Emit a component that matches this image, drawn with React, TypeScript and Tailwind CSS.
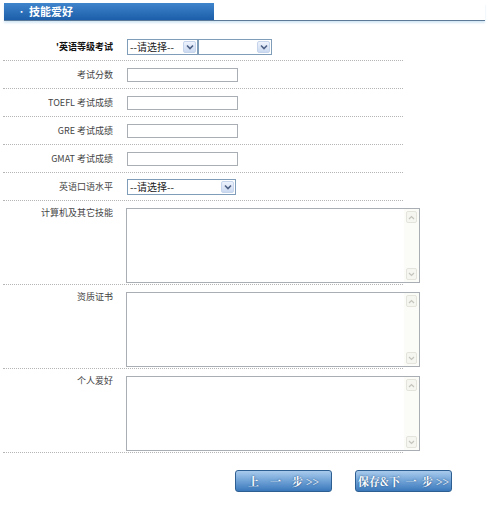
import React from 'react';

const cjk = '"Noto Sans CJK SC", "Liberation Sans", sans-serif';

function Chevron() {
  return (
    <svg width="8" height="6" viewBox="0 0 8 6">
      <path d="M1 1.5 L4 4.5 L7 1.5" fill="none" stroke="#4d6185" strokeWidth="1.6" />
    </svg>
  );
}

function FakeSelect({ width, text }: { width: number; text?: string }) {
  return (
    <div
      className="flex h-[16px] shrink-0 items-stretch border border-[#7f9db9] bg-white"
      style={{ width }}
    >
      <div className="flex-1 truncate whitespace-nowrap pl-[2px] text-[10px] leading-[14px] text-[#222]">{text}</div>
      <div className="m-[1px] flex w-[13px] items-center justify-center rounded-[2px] border border-[#c6d5ec] bg-gradient-to-b from-[#eef3fc] to-[#cbdaf1]">
        <Chevron />
      </div>
    </div>
  );
}

function TextBox() {
  return <div className="h-[14px] w-[111px] border border-[#a9aeb4] bg-white" />;
}

function FakeTextArea() {
  return (
    <div className="flex h-[75px] w-[294px] shrink-0 border border-[#a9aeb4] bg-white">
      <div className="flex-1" />
      <div className="flex w-[15px] flex-col items-center justify-between bg-[#fbfbf8] py-[2px]">
        <div className="flex h-[12px] w-[11px] items-center justify-center rounded-[2px] border border-[#e4e4dc] bg-[#f6f6f1]">
          <svg width="7" height="5" viewBox="0 0 7 5">
            <path d="M1 4 L3.5 1.5 L6 4" fill="none" stroke="#c4c4bc" strokeWidth="1.2" />
          </svg>
        </div>
        <div className="flex h-[12px] w-[11px] items-center justify-center rounded-[2px] border border-[#e4e4dc] bg-[#f6f6f1]">
          <svg width="7" height="5" viewBox="0 0 7 5">
            <path d="M1 1 L3.5 3.5 L6 1" fill="none" stroke="#c4c4bc" strokeWidth="1.2" />
          </svg>
        </div>
      </div>
    </div>
  );
}

function Row({ label, bold, children }: { label: string; bold?: boolean; children: React.ReactNode }) {
  return (
    <div className="flex h-[28px] w-[400px] items-center border-b border-dotted border-[#b5b5b5]">
      <div
        className={`w-[110px] shrink-0 whitespace-nowrap text-right text-[9px] leading-[12px] ${bold ? 'font-bold text-[#111]' : 'text-[#444]'}`}
      >
        {label}
      </div>
      <div className="ml-[14px] shrink-0">{children}</div>
    </div>
  );
}

function AreaRow({ label }: { label: string }) {
  return (
    <div className="flex h-[84px] w-[400px] items-start border-b border-dotted border-[#b5b5b5] pt-[6px]">
      <div className="w-[110px] shrink-0 whitespace-nowrap text-right text-[9px] leading-[12px] text-[#444]">{label}</div>
      <div className="ml-[13px] mt-[1px] shrink-0">
        <FakeTextArea />
      </div>
    </div>
  );
}

function BlueButton({ children }: { children: React.ReactNode }) {
  return (
    <div
      className="flex h-[22px] w-[97px] items-center justify-center whitespace-pre rounded-[3px] border border-[#2e5f93] bg-gradient-to-b from-[#a9cbec] via-[#6fa2d6] to-[#3a78bb] text-[11px] font-bold text-white [text-shadow:0_0_2px_#1d4878]"
      style={{ fontFamily: '"Noto Serif CJK SC", "Liberation Serif", serif' }}
    >
      {children}
    </div>
  );
}

export default function App() {
  return (
    <div className="h-[507px] w-[488px] bg-white" style={{ fontFamily: cjk }}>
      {/* title bar */}
      <div className="ml-[4px] mr-[3px] mt-[3px] flex items-end border-b border-[#5d7b99] shadow-[0_2px_2px_#d6e8f6]">
        <div className="flex h-[17px] w-[210px] items-center bg-gradient-to-b from-[#3f85cc] to-[#1c5ea9] pl-[14px] text-[11px] font-bold text-white">
          <span className="mr-[4px] text-[7px]">•</span>技能爱好
        </div>
      </div>

      <div className="ml-[3px] mt-[12px]">
        <Row label="'英语等级考试" bold>
          <div className="flex">
            <FakeSelect width={71} text="--请选择--" />
            <FakeSelect width={74} />
          </div>
        </Row>
        <Row label="考试分数">
          <TextBox />
        </Row>
        <Row label="TOEFL 考试成绩">
          <TextBox />
        </Row>
        <Row label="GRE 考试成绩">
          <TextBox />
        </Row>
        <Row label="GMAT 考试成绩">
          <TextBox />
        </Row>
        <Row label="英语口语水平">
          <FakeSelect width={109} text="--请选择--" />
        </Row>
        <AreaRow label="计算机及其它技能" />
        <AreaRow label="资质证书" />
        <AreaRow label="个人爱好" />
      </div>

      <div className="mt-[17px] flex gap-[23px] pl-[235px]">
        <BlueButton>上　一　步 &gt;&gt;</BlueButton>
        <BlueButton>保存&amp;下  一  步 &gt;&gt;</BlueButton>
      </div>
    </div>
  );
}
